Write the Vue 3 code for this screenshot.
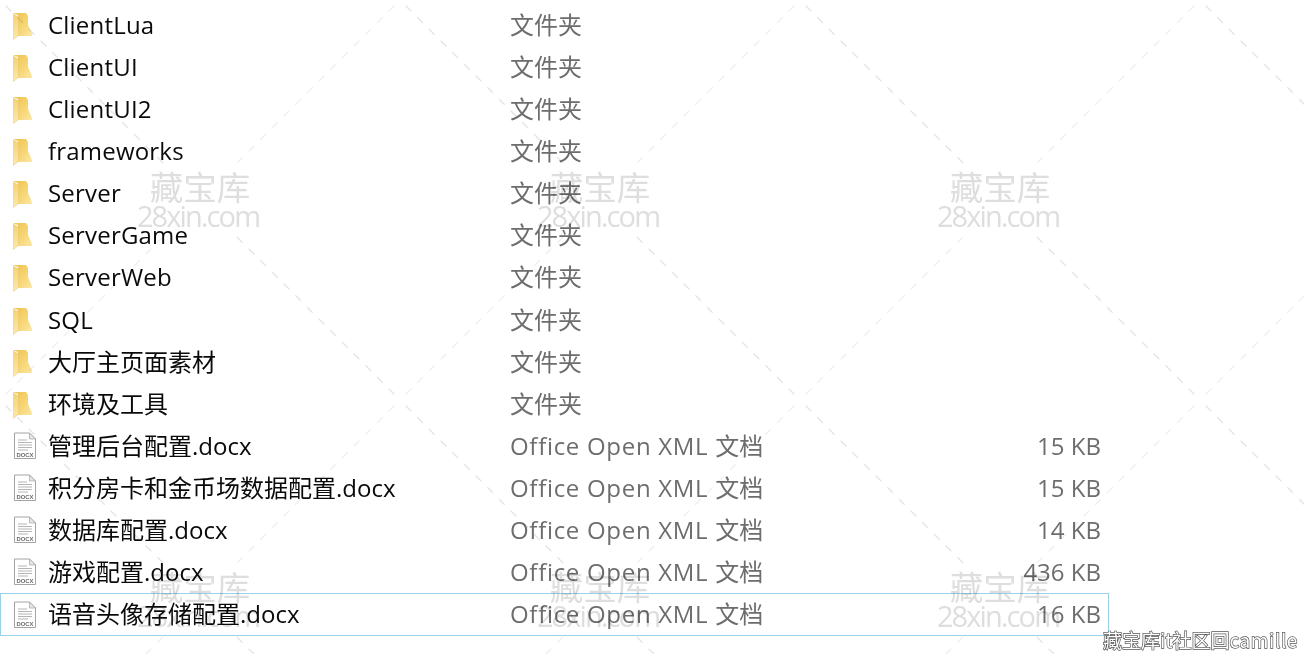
<script setup>
const names = ['ClientLua','ClientUI','ClientUI2','frameworks','Server','ServerGame','ServerWeb','SQL','大厅主页面素材','环境及工具']
const docs = [
  ['管理后台配置.docx','15 KB'],
  ['积分房卡和金币场数据配置.docx','15 KB'],
  ['数据库配置.docx','14 KB'],
  ['游戏配置.docx','436 KB'],
  ['语音头像存储配置.docx','16 KB'],
]
const rows = [
  ...names.map((n, i) => ({ name: n, size: '', folder: true, low: i < 8, wide: i < 8 })),
  ...docs.map(([n, s]) => ({ name: n, size: s, folder: false, low: false, wide: false })),
]
const centers = []
for (const y of [200, 600]) for (const x of [-200, 200, 600, 1000, 1400]) centers.push({ x, y })
const arms = []
for (const c of centers) {
  for (const [dx, dy] of [[1,1],[-1,-1]]) arms.push({ k: `a${c.x}${c.y}${dx}`, x1: c.x + dx*37, y1: c.y + dy*37, x2: c.x + dx*200, y2: c.y + dy*200, cls: 'back' })
  for (const [dx, dy] of [[1,-1],[-1,1]]) arms.push({ k: `b${c.x}${c.y}${dx}`, x1: c.x + dx*37, y1: c.y + dy*37, x2: c.x + dx*200, y2: c.y + dy*200, cls: 'fwd' })
}
const marks = centers.filter(c => c.x > 0 && c.x < 1304)
</script>

<template>
  <div class="page">
    <div class="list">
      <div v-for="(r, i) in rows" :key="r.name" class="row" :class="{ selected: i === rows.length - 1, tall: i === 6 }">
        <div class="icon">
          <svg v-if="r.folder" class="folder" width="20" height="27" viewBox="0 0 20 27">
            <defs>
              <linearGradient :id="'fb' + i" x1="0" y1="0" x2="1" y2="1">
                <stop offset="0" stop-color="#efc04f" />
                <stop offset="0.6" stop-color="#f7d777" />
                <stop offset="1" stop-color="#fbe7a6" />
              </linearGradient>
              <linearGradient :id="'fl' + i" x1="0" y1="0" x2="0" y2="1">
                <stop offset="0" stop-color="#f6d271" />
                <stop offset="1" stop-color="#fce9ae" />
              </linearGradient>
            </defs>
            <path :fill="'url(#fb' + i + ')'" d="M0 0H13L15 3V12L19 21V23H5V2Z" />
            <path :fill="'url(#fl' + i + ')'" stroke="#e7c56d" stroke-width="0.5" d="M0.3 1L5.5 4V22.5L0.3 26.5Z" />
          </svg>
          <svg v-else width="24" height="28" viewBox="0 0 24 28">
            <path fill="#fff" stroke="#a3a3a3" d="M1.5 1H16.5L22.5 7V26.5H1.5Z" />
            <path fill="#e6e6e6" stroke="#a3a3a3" stroke-width="0.7" d="M16.5 1V7H22.5Z" />
            <path stroke="#b5b5b5" fill="none" d="M5 8H14M5 10.500H19M5 13H19M5 15.500H19M5 18H15" />
            <text class="doc-label" x="3.500" y="25" textLength="17" lengthAdjust="spacingAndGlyphs">DOCX</text>
          </svg>
        </div>
        <div class="cell name" :class="{ low: r.low, wide: r.wide }">{{ r.name }}</div>
        <div v-if="r.folder" class="cell type">文件夹</div>
        <div v-else class="cell type"><span class="latin">Office Open XML </span>文档</div>
        <div class="cell size low">{{ r.size }}</div>
      </div>
    </div>

    <div class="watermarks">
      <svg class="dashes" width="1304" height="654">
        <line v-for="a in arms" :key="a.k" :class="a.cls" :x1="a.x1" :y1="a.y1" :x2="a.x2" :y2="a.y2" />
      </svg>
      <div v-for="m in marks" :key="m.x + '-' + m.y" class="mark" :style="{ left: m.x - 100 + 'px', top: m.y - 32 + 'px' }">
        <span class="mark-cn">藏宝库</span>
        <span class="mark-en">28xin.com</span>
      </div>
    </div>

    <div class="credit">藏宝库it社区回<span class="credit-en">camille</span></div>
  </div>
</template>

<style>
html, body { margin: 0; background: #fff; overflow: hidden; }
</style>

<style scoped>
.page {
  position: relative;
  width: 1304px;
  height: 654px;
  overflow: hidden;
  background: #fff;
  font-family: "Open Sans", "Noto Sans CJK SC", sans-serif;
}
.list {
  display: flex;
  flex-direction: column;
  padding-top: 4px;
}
.row {
  box-sizing: border-box;
  display: grid;
  grid-template-columns: 48px 462px 1fr auto;
  align-items: center;
  width: 1109px;
  height: 42px;
  padding-right: 8px;
  font-size: 24px;
}
.tall {
  height: 43px;
}
.selected {
  height: 43px;
  box-shadow: inset 0 0 0 1px #99d1e8;
}
.icon {
  display: flex;
  align-items: center;
  padding-left: 13px;
  height: 100%;
}
.folder {
  margin-top: 2px;
}
.cell {
  margin-bottom: 4px;
}
.low {
  padding-top: 2px;
}
.name {
  color: #0a0a0a;
  white-space: nowrap;
}
.wide {
  letter-spacing: 0.2px;
}
.type {
  color: #6d6d6d;
  white-space: nowrap;
}
.latin {
  letter-spacing: 0.7px;
}
.size {
  color: #6d6d6d;
  text-align: right;
}
.doc-label {
  font-family: "Liberation Sans", sans-serif;
  font-size: 6px;
  font-weight: 700;
  fill: #6b6b6b;
}
.watermarks {
  position: absolute;
  inset: 0;
  mix-blend-mode: multiply;
  pointer-events: none;
}
.dashes {
  position: absolute;
  left: 0;
  top: 0;
}
.dashes line {
  stroke-width: 1.5;
  stroke-dasharray: 8 8.5;
}
.dashes .back { stroke: #e6e6e6; }
.dashes .fwd { stroke: #f0f0f0; }
.mark {
  position: absolute;
  width: 200px;
  display: flex;
  flex-direction: column;
  align-items: center;
  color: #dedede;
}
.mark-cn {
  font-family: "Noto Sans CJK SC", sans-serif;
  font-size: 33.500px;
  line-height: 36px;
}
.mark-en {
  font-size: 29px;
  line-height: 28px;
  letter-spacing: -1.9px;
  margin-top: -2px;
  margin-right: 4px;
}
.credit {
  position: absolute;
  right: 6px;
  bottom: 3px;
  font-family: "Noto Sans CJK SC", sans-serif;
  font-size: 19px;
  line-height: 22px;
  color: #fff;
  -webkit-text-stroke: 1.4px #555;
  paint-order: stroke fill;
  white-space: nowrap;
}
.credit-en {
  letter-spacing: 0.6px;
}
</style>
